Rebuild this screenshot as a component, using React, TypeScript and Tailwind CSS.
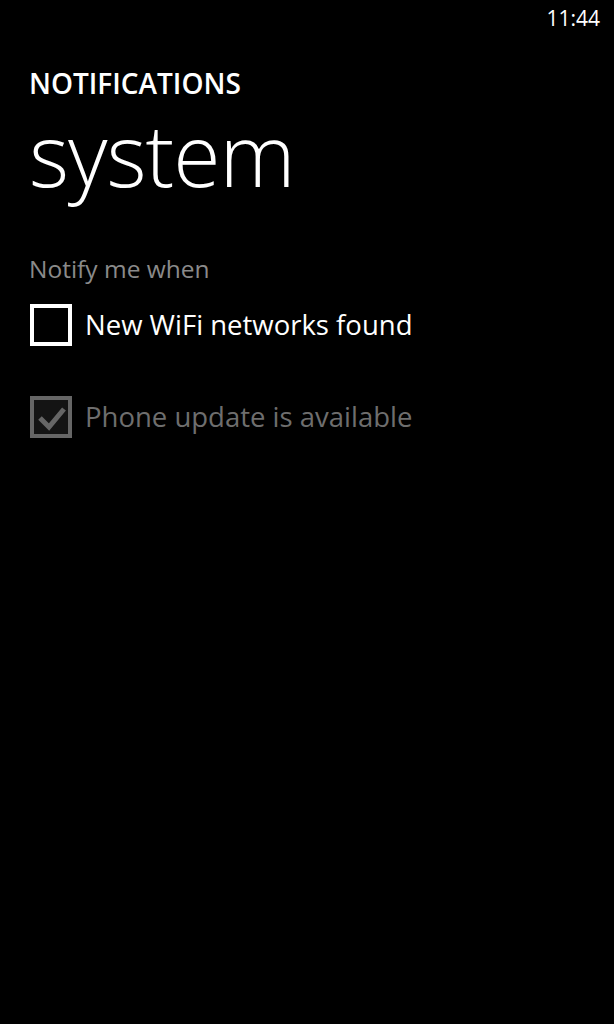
export default function App() {
  return (
    <div className="relative h-[1024px] w-[614px] overflow-hidden bg-black text-white [font-family:'Open_Sans',sans-serif]">
      {/* status bar */}
      <div className="flex h-[40px] justify-end pr-[14px] pt-[3px] text-[21px] leading-[30px]">11:44</div>

      <div className="pl-[29px]">
        <div className="mt-[26px] text-[28px] font-semibold leading-[34px]">NOTIFICATIONS</div>
        <div className="mt-[11px] text-[86px] font-light leading-[86px] tracking-[-1px]">system</div>

        <div className="mt-[57px] text-[24.5px] leading-[30px] text-[#8a8a8a]">Notify me when</div>

        <div className="mt-[20px] flex items-center gap-[13px]">
          <div className="ml-[1px] h-[42px] w-[42px] border-[4px] border-white" />
          <span className="text-[27.5px] leading-[34px]">New WiFi networks found</span>
        </div>

        <div className="mt-[50px] flex items-center gap-[13px] text-[#6e6e6e]">
          <div className="ml-[1px] h-[42px] w-[42px] border-[4px] border-[#666] bg-[#141414]">
            <svg viewBox="0 0 34 34" className="h-full w-full">
              <path d="M6 18 L15 27 L30 9" fill="none" stroke="#666" strokeWidth="5" />
            </svg>
          </div>
          <span className="text-[27.5px] leading-[34px]">Phone update is available</span>
        </div>
      </div>
    </div>
  );
}
